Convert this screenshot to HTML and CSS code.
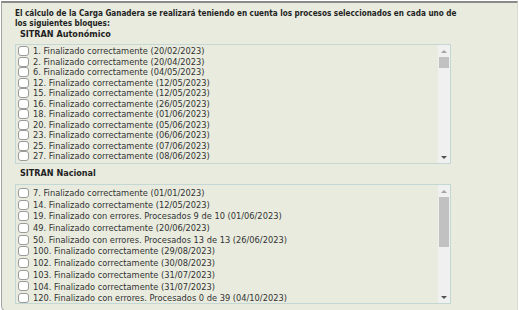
FILE: index.html
```html
<!DOCTYPE html>
<html lang="es">
<head>
  <meta charset="UTF-8" />
  <title>Carga Ganadera - Procesos</title>
  <link rel="stylesheet" href="styles.css">
</head>
<body>

  <div class="panel">
    <p class="intro">El cálculo de la Carga Ganadera se realizará teniendo en cuenta los procesos seleccionados en cada uno de<br>los siguientes bloques:</p>

    <section class="block">
      <h3 class="block-title">SITRAN Autonómico</h3>
      <div class="listbox">
        <ul class="options">
          <li><label><input type="checkbox"> 1. Finalizado correctamente (20/02/2023)</label></li>
          <li><label><input type="checkbox"> 2. Finalizado correctamente (20/04/2023)</label></li>
          <li><label><input type="checkbox"> 6. Finalizado correctamente (04/05/2023)</label></li>
          <li><label><input type="checkbox"> 12. Finalizado correctamente (12/05/2023)</label></li>
          <li><label><input type="checkbox"> 15. Finalizado correctamente (12/05/2023)</label></li>
          <li><label><input type="checkbox"> 16. Finalizado correctamente (26/05/2023)</label></li>
          <li><label><input type="checkbox"> 18. Finalizado correctamente (01/06/2023)</label></li>
          <li><label><input type="checkbox"> 20. Finalizado correctamente (05/06/2023)</label></li>
          <li><label><input type="checkbox"> 23. Finalizado correctamente (06/06/2023)</label></li>
          <li><label><input type="checkbox"> 25. Finalizado correctamente (07/06/2023)</label></li>
          <li><label><input type="checkbox"> 27. Finalizado correctamente (08/06/2023)</label></li>
        </ul>
        <div class="scrollbar">
          <span class="arrow up"></span>
          <div class="track"><span class="thumb small"></span></div>
          <span class="arrow down"></span>
        </div>
      </div>
    </section>

    <section class="block">
      <h3 class="block-title">SITRAN Nacional</h3>
      <div class="listbox">
        <ul class="options roomy">
          <li><label><input type="checkbox"> 7. Finalizado correctamente (01/01/2023)</label></li>
          <li><label><input type="checkbox"> 14. Finalizado correctamente (12/05/2023)</label></li>
          <li><label><input type="checkbox"> 19. Finalizado con errores. Procesados 9 de 10 (01/06/2023)</label></li>
          <li><label><input type="checkbox"> 49. Finalizado correctamente (20/06/2023)</label></li>
          <li><label><input type="checkbox"> 50. Finalizado con errores. Procesados 13 de 13 (26/06/2023)</label></li>
          <li><label><input type="checkbox"> 100. Finalizado correctamente (29/08/2023)</label></li>
          <li><label><input type="checkbox"> 102. Finalizado correctamente (30/08/2023)</label></li>
          <li><label><input type="checkbox"> 103. Finalizado correctamente (31/07/2023)</label></li>
          <li><label><input type="checkbox"> 104. Finalizado correctamente (31/07/2023)</label></li>
          <li><label><input type="checkbox"> 120. Finalizado con errores. Procesados 0 de 39 (04/10/2023)</label></li>
        </ul>
        <div class="scrollbar">
          <span class="arrow up"></span>
          <div class="track"><span class="thumb large"></span></div>
          <span class="arrow down"></span>
        </div>
      </div>
    </section>
  </div>

</body>
</html>
```

FILE: styles.css
```css
body {
  margin: 0;
  background: #ffffff;
  font-family: "DejaVu Sans Condensed", "DejaVu Sans", sans-serif;
  font-stretch: condensed;
  color: #2b2b2b;
}

.panel {
  margin: 1px 1px 0 1px;
  height: 303px;
  padding: 5px 0 0 13px;
  background: #e8ebde;
  border: 1px solid #a4a4a4;
  border-top: 2px solid #8a8a8a;
  border-right-color: #d8dccf;
  border-radius: 0 0 0 6px;
}

.intro {
  margin: 0;
  font-size: 8.1px;
  font-weight: bold;
  line-height: 10px;
  color: #1f1f1f;
  white-space: nowrap;
}

.block {
  margin-right: 66px;
}

.block-title {
  margin: 1px 0 4px 5px;
  font-size: 9px;
  font-weight: bold;
  line-height: 11px;
  color: #1f1f1f;
}

.block + .block .block-title {
  margin-top: 4px;
  margin-bottom: 5px;
}

.listbox {
  display: flex;
  height: 118px;
  border: 1px solid #c3d8d4;
  overflow: hidden;
}

.options {
  flex: 1;
  margin: 0;
  padding: 1px 0 0 0;
  list-style: none;
  font-size: 9.2px;
  color: #333;
}

.options li {
  height: 10.5px;
  line-height: 10.5px;
  white-space: nowrap;
}

.options.roomy {
  padding-top: 2px;
}

.options.roomy li {
  height: 11.7px;
  line-height: 11.7px;
}

.options label {
  display: flex;
  align-items: center;
  height: 100%;
}

.options input {
  appearance: none;
  width: 11px;
  height: 10px;
  margin: 0 4px 0 2px;
  background: #fff;
  border: 1px solid #9a9a9a;
  border-radius: 3px;
}

.scrollbar {
  display: flex;
  flex-direction: column;
  width: 12px;
  background: #f0f0f0;
}

.arrow {
  display: flex;
  align-items: center;
  justify-content: center;
  height: 12px;
}

.arrow::before {
  content: "";
  border-left: 3px solid transparent;
  border-right: 3px solid transparent;
}

.arrow.up::before {
  border-bottom: 3px solid #a3a3a3;
}

.arrow.down::before {
  border-top: 3px solid #505050;
}

.track {
  flex: 1;
  padding: 0 1px;
}

.thumb {
  display: block;
  background: #c1c1c1;
}

.thumb.small { height: 11px; }
.thumb.large { height: 50px; }
```
